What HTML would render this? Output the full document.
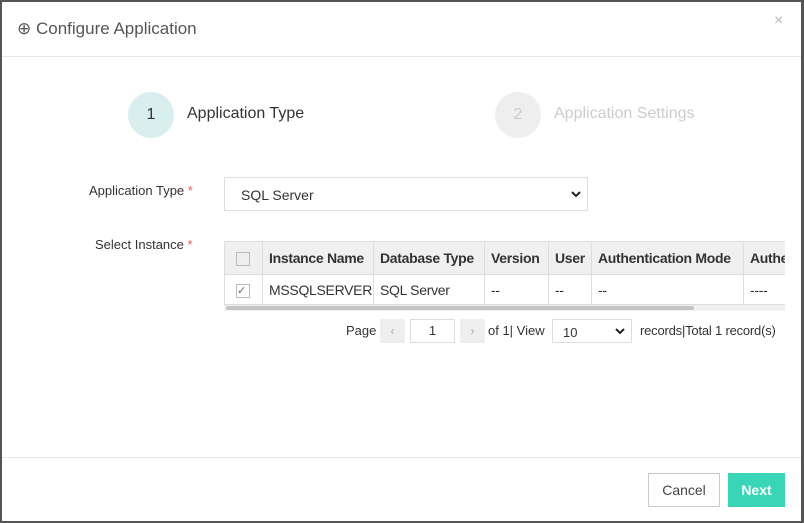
<!DOCTYPE html>
<html><head><style>
*{box-sizing:border-box;margin:0;padding:0}
body{width:804px;height:523px;background:#555;font-family:"Liberation Sans",Arial,sans-serif;position:relative;overflow:hidden;color:#333}
.m{position:absolute;left:2px;top:2px;width:799px;height:519px;background:#fff}
.a{position:absolute;white-space:nowrap}
table{border-collapse:collapse;position:absolute;left:224px;top:241px;font-size:14px;letter-spacing:-0.3px;table-layout:fixed;width:619px}
td,th{border:1px solid #ddd;padding:0 6px;text-align:left;white-space:nowrap;overflow:hidden}
th{background:#f0f0f0;height:33px;font-weight:bold;color:#333}
td{height:30px;color:#333}
.cb{width:14px;height:14px;border:1px solid #bbb;background:#eee;display:inline-block;vertical-align:middle}
.chev{position:absolute;right:6px;top:50%;margin-top:-4px}
.c0{padding:0 11px!important}
</style></head><body>
<div class="m">
<div class="a" style="left:15px;top:17px;font-size:17px;color:#555">⊕ Configure Application</div>
<div class="a" style="left:772px;top:10px;font-size:16px;color:#bbb">×</div>
<div class="a" style="left:0;top:54px;width:799px;height:1px;background:#e6e6e6"></div>
<div class="a" style="left:126px;top:90px;width:46px;height:46px;border-radius:50%;background:#d9efee;font-size:16px;text-align:center;line-height:46px;color:#333">1</div>
<div class="a" style="left:185px;top:103px;font-size:16px;color:#333">Application Type</div>
<div class="a" style="left:493px;top:90px;width:46px;height:46px;border-radius:50%;background:#eee;font-size:16px;text-align:center;line-height:46px;color:#ccc">2</div>
<div class="a" style="left:552px;top:103px;font-size:16px;color:#ccc">Application Settings</div>
<div class="a" style="left:87px;top:181px;font-size:13px;color:#333">Application Type <span style="color:#e55">*</span></div>
<div class="a" style="left:222px;top:175px;width:364px;height:34px;border:1px solid #ddd;font-size:14px;padding:9px 0 0 16px">SQL Server<svg class="chev" width="10" height="8" viewBox="0 0 10 8"><path d="M1 2 L5 6 L9 2" stroke="#222" stroke-width="2" fill="none"/></svg></div>
<div class="a" style="left:93px;top:235px;font-size:13px;color:#333">Select Instance <span style="color:#e55">*</span></div>
<div class="a" style="left:222px;top:239px;width:561px;height:70px;overflow:hidden">
<table style="left:0;top:0">
<colgroup><col style="width:38px"><col style="width:111px"><col style="width:111px"><col style="width:64px"><col style="width:43px"><col style="width:152px"><col style="width:100px"></colgroup>
<tr><th class="c0"><span class="cb"></span></th><th>Instance Name</th><th>Database Type</th><th>Version</th><th>User</th><th>Authentication Mode</th><th>Authentication</th></tr>
<tr><td class="c0"><span class="cb" style="background:#fff;font-size:11px;line-height:12px;color:#666">✓</span></td><td>MSSQLSERVER</td><td>SQL Server</td><td>--</td><td>--</td><td>--</td><td>----</td></tr>
</table>
<div class="a" style="left:0;top:64px;width:561px;height:6px;background:#f0f0f0"></div>
<div class="a" style="left:2px;top:65px;width:468px;height:4px;border-radius:2px;background:#c4c4c4"></div>
</div>
<div class="a" style="left:344px;top:321px;font-size:13px">Page</div>
<div class="a" style="left:378px;top:317px;width:25px;height:24px;background:#eee;color:#aaa;font-size:12px;text-align:center;line-height:24px">‹</div>
<div class="a" style="left:408px;top:317px;width:45px;height:24px;border:1px solid #ddd;font-size:13px;text-align:center;line-height:22px">1</div>
<div class="a" style="left:458px;top:317px;width:25px;height:24px;background:#eee;color:#aaa;font-size:12px;text-align:center;line-height:24px">›</div>
<div class="a" style="left:486px;top:321px;font-size:13px">of 1| View</div>
<div class="a" style="left:550px;top:317px;width:80px;height:24px;border:1px solid #ddd;font-size:13px;padding:5px 0 0 10px">10<svg class="chev" width="10" height="8" viewBox="0 0 10 8"><path d="M1 2 L5 6 L9 2" stroke="#222" stroke-width="2" fill="none"/></svg></div>
<div class="a" style="left:638px;top:321px;font-size:13px;letter-spacing:-0.2px">records|Total 1 record(s)</div>
<div class="a" style="left:0;top:455px;width:799px;height:1px;background:#e6e6e6"></div>
<div class="a" style="left:646px;top:471px;width:72px;height:34px;border:1px solid #ccc;font-size:14px;text-align:center;line-height:32px;color:#444">Cancel</div>
<div class="a" style="left:726px;top:471px;width:57px;height:34px;background:#38d6b6;font-size:14px;font-weight:bold;color:#fff;text-align:center;line-height:34px">Next</div>
</div>
</body></html>
